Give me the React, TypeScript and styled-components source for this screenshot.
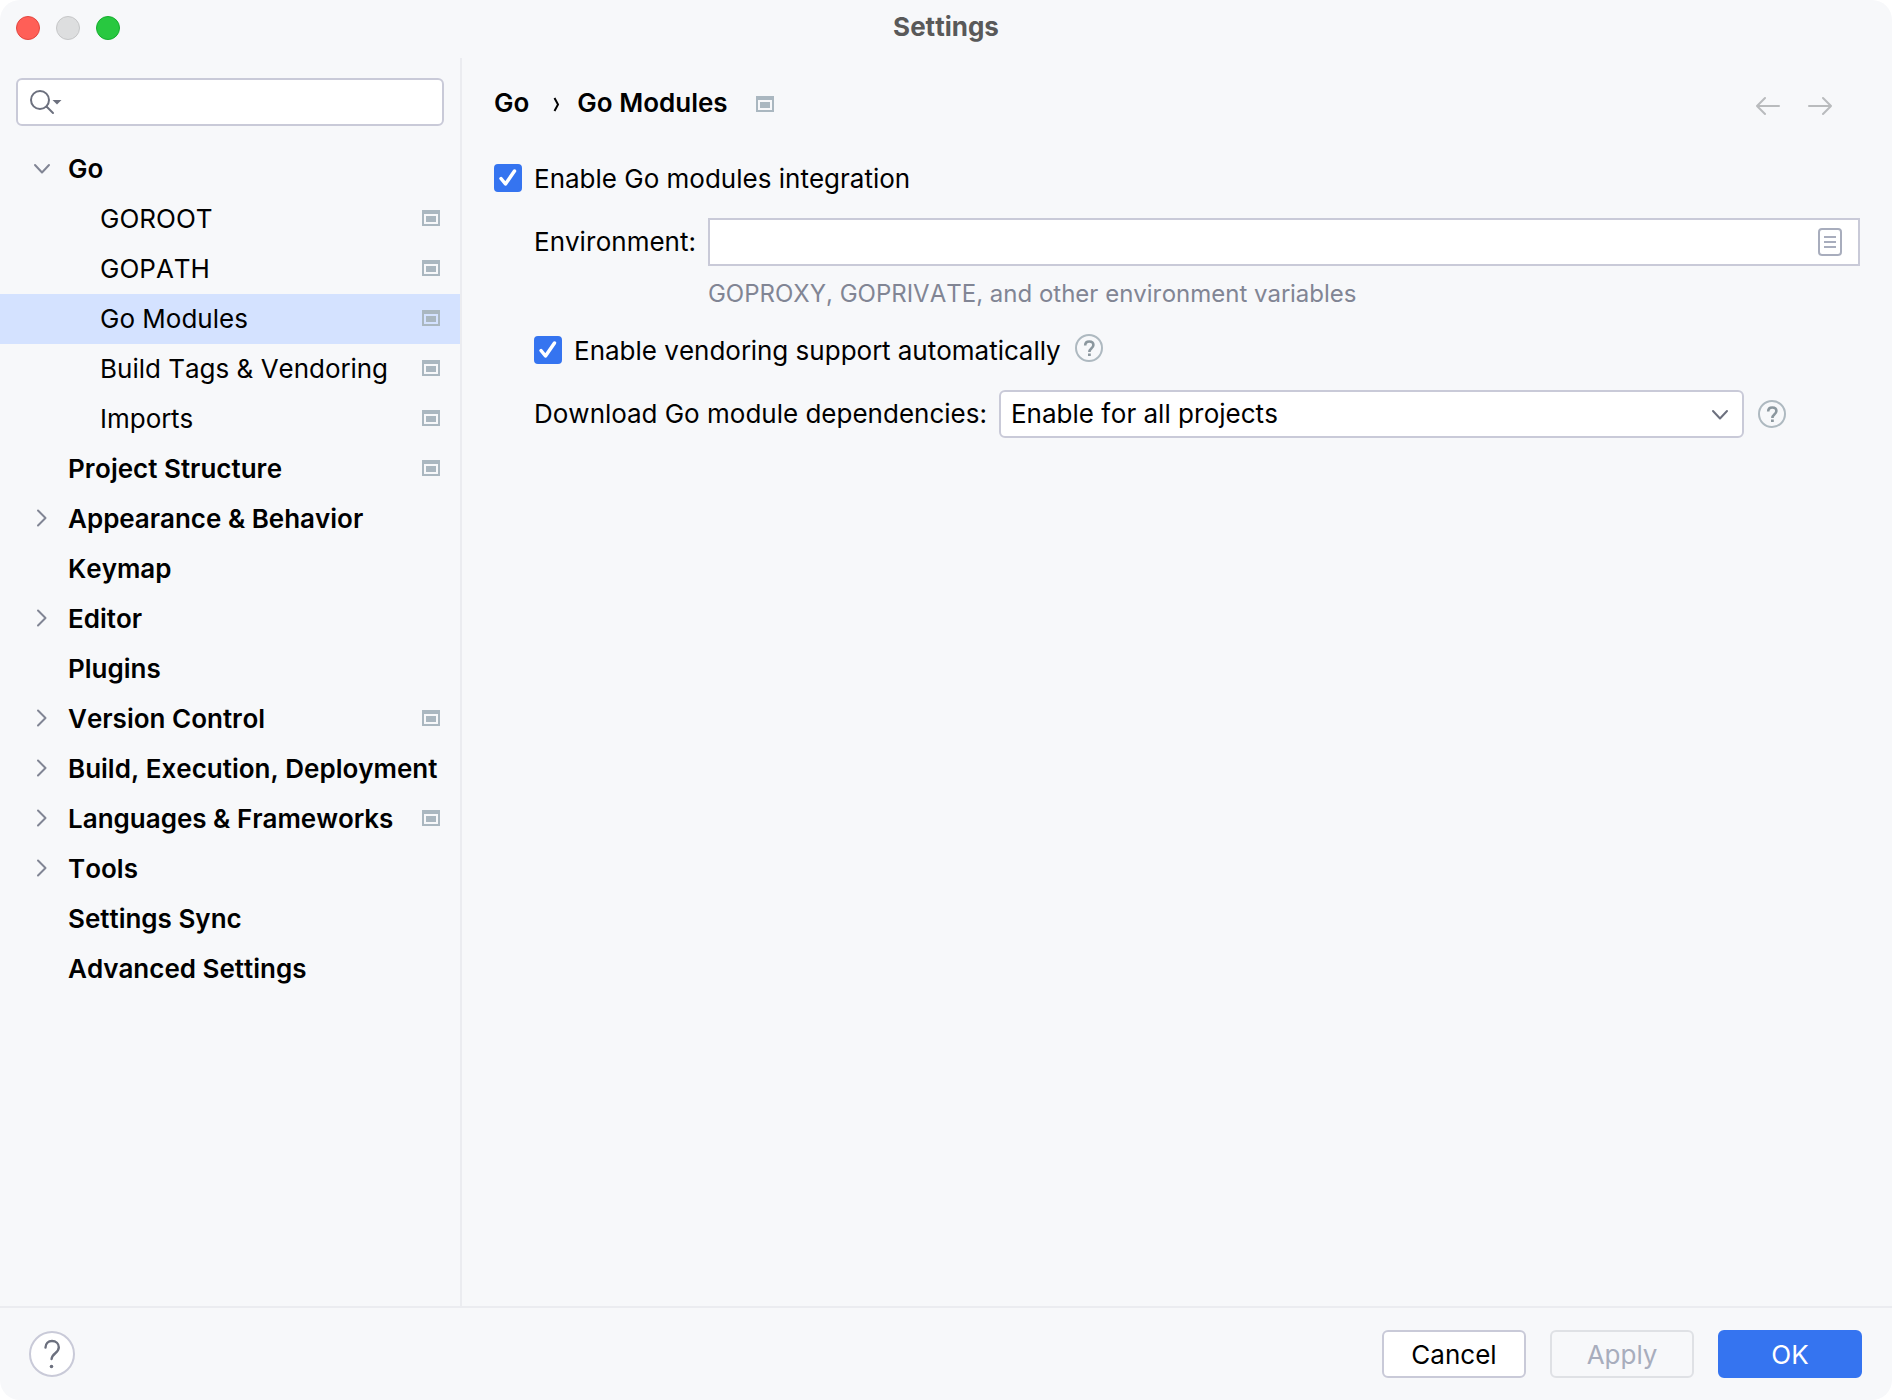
import React, { useState } from "react";
import styled, { createGlobalStyle, css } from "styled-components";

const GlobalStyle = createGlobalStyle`
  * {
    box-sizing: border-box;
  }
  body {
    margin: 0;
    background: #ffffff;
  }
  body, button, input, select {
    font-family: Inter, "Liberation Sans", sans-serif;
    font-size: 26px;
    line-height: 32px;
    font-kerning: none;
    color: #000000;
  }
`;

const Window = styled.div`
  display: flex;
  flex-direction: column;
  min-height: 100vh;
  background: #f7f8fa;
  border-radius: 20px;
  overflow: hidden;
`;

const TitleBar = styled.header`
  display: grid;
  grid-template-columns: 1fr auto 1fr;
  align-items: center;
  height: 58px;
  padding: 0 16px 2px;
`;

const WindowControls = styled.div`
  display: flex;
  gap: 16px;
`;

const WindowControl = styled.button<{ $fill: string; $edge: string }>`
  width: 24px;
  height: 24px;
  padding: 0;
  border: 1px solid ${(p) => p.$edge};
  border-radius: 50%;
  background: ${(p) => p.$fill};
`;

const Title = styled.h1`
  margin: 0;
  padding-bottom: 2px;
  font-size: 26px;
  line-height: 32px;
  font-weight: 700;
  color: #595959;
`;

const Body = styled.div`
  display: flex;
  flex: 1;
`;

const Sidebar = styled.aside`
  display: flex;
  flex-direction: column;
  gap: 18px;
  width: 462px;
  flex: none;
  padding-top: 20px;
  border-right: 2px solid #ebecf0;
`;

const SearchBox = styled.label`
  display: flex;
  align-items: center;
  gap: 8px;
  height: 48px;
  margin: 0 16px;
  padding: 0 12px;
  border: 2px solid #c9cad8;
  border-radius: 6px;
  background: #ffffff;
`;

const PlainInput = styled.input`
  flex: 1;
  min-width: 0;
  border: 0;
  padding: 0;
  outline: 0;
  background: transparent;
`;

const Tree = styled.ul`
  margin: 0;
  padding: 0;
  list-style: none;
`;

const TreeRow = styled.button<{ $nested: boolean; $selected: boolean }>`
  display: flex;
  align-items: center;
  width: 100%;
  height: 50px;
  padding: 0 20px 0 ${(p) => (p.$nested ? 60 : 28)}px;
  border: 0;
  background: ${(p) => (p.$selected ? "#d4e2ff" : "transparent")};
  font-weight: ${(p) => (p.$nested ? 400 : 600)};
  text-align: left;
  white-space: nowrap;
  & svg {
    margin-bottom: 2px;
  }
`;

const Arrow = styled.span`
  display: flex;
  width: 40px;
  flex: none;
`;

const RowLabel = styled.span`
  flex: 1;
  min-width: 0;
`;

const Main = styled.main`
  flex: 1;
  min-width: 0;
  padding: 28px 32px;
`;

const PageHeader = styled.div`
  display: flex;
  align-items: center;
  justify-content: space-between;
  height: 36px;
  margin-bottom: 39px;
`;

const Breadcrumbs = styled.nav`
  display: flex;
  align-items: center;
  font-weight: 600;
`;

const Crumb = styled.a`
  padding-bottom: 2px;
  color: inherit;
  text-decoration: none;
`;

const CrumbSeparator = styled.span`
  display: flex;
  margin: 0 16px 0 24px;
`;

const CrumbBadge = styled.span`
  display: flex;
  margin-left: 28px;
`;

const History = styled.div`
  display: flex;
  gap: 28px;
  padding: 4px 28px 0 0;
`;

const IconButton = styled.button`
  display: flex;
  padding: 0;
  border: 0;
  background: transparent;
`;

const CheckLabel = styled.label`
  display: flex;
  align-items: center;
  gap: 12px;
`;

const CheckText = styled.span`
  padding-top: 2px;
`;

const CheckBox = styled.input`
  appearance: none;
  width: 28px;
  height: 28px;
  flex: none;
  margin: 0;
  border: 2px solid #c9cad8;
  border-radius: 4px;
  background: #ffffff;
  &:checked {
    border-color: #3574f0;
    background: #3574f0;
  }
`;

const CheckCell = styled.span`
  display: grid;
  & > * {
    grid-area: 1 / 1;
  }
  & > svg {
    pointer-events: none;
  }
`;

const Options = styled.div`
  display: flex;
  flex-direction: column;
  margin-left: 40px;
  padding-top: 23px;
`;

const EnvironmentGrid = styled.div`
  display: grid;
  grid-template-columns: auto 1fr;
  align-items: center;
  column-gap: 12px;
  row-gap: 12px;
  margin-bottom: 23px;
`;

const EnvironmentField = styled.div`
  display: flex;
  align-items: center;
  height: 48px;
  padding: 0 16px 0 10px;
  border: 2px solid #c9cad8;
  background: #ffffff;
`;

const Hint = styled.p`
  grid-column: 2;
  margin: 0;
  font-size: 24px;
  line-height: 32px;
  color: #818594;
`;

const OptionLine = styled.div`
  display: flex;
  align-items: center;
  gap: 14px;
  margin-bottom: 23px;
  & > button {
    padding-bottom: 4px;
  }
`;

const DownloadLine = styled.div`
  display: flex;
  align-items: center;
  gap: 12px;
  padding-right: 74px;
`;

const SelectBox = styled.div`
  display: grid;
  flex: 1;
  align-items: center;
  margin-right: 2px;
  & > * {
    grid-area: 1 / 1;
  }
  & > svg {
    justify-self: end;
    margin-right: 10px;
    pointer-events: none;
  }
`;

const Select = styled.select`
  appearance: none;
  width: 100%;
  height: 48px;
  padding: 0 48px 0 10px;
  border: 2px solid #c9cad8;
  border-radius: 6px;
  background: #ffffff;
`;

const Footer = styled.footer`
  display: flex;
  align-items: center;
  justify-content: space-between;
  height: 94px;
  padding: 0 30px 0 29px;
  border-top: 2px solid #ebecf0;
`;

const Actions = styled.div`
  display: flex;
  gap: 24px;
`;

const Button = styled.button<{ $primary?: boolean }>`
  width: 144px;
  height: 48px;
  padding: 2px 0 0;
  border: 2px solid #c9cad8;
  border-radius: 6px;
  background: #ffffff;
  ${(p) =>
    p.$primary &&
    css`
      border-color: #3574f0;
      background: #3574f0;
      color: #ffffff;
    `}
  &:disabled {
    border-color: #dfe1e5;
    background: transparent;
    color: #a8adbd;
  }
`;

const SearchIcon = () => (
  <svg width="34" height="28" viewBox="0 0 34 28" fill="none" aria-hidden="true">
    <circle cx="10" cy="12" r="9" stroke="#6c707e" strokeWidth="2" />
    <path d="M16.5 18.500L23 25" stroke="#6c707e" strokeWidth="2" strokeLinecap="round" />
    <path d="M22.500 12h9l-4.500 4.500z" fill="#6c707e" />
  </svg>
);

const ProjectIcon = () => (
  <svg width="18" height="16" viewBox="0 0 18 16" aria-hidden="true">
    <path fill="#aab7c0" fillRule="evenodd" d="M0 0h18v16H0zM2 4v10h14V4z" />
    <path fill="#aab7c0" d="M4 6h10v6H4z" />
  </svg>
);

const Chevron = ({ down, color = "#818594" }: { down?: boolean; color?: string }) => (
  <svg width="28" height="20" viewBox="0 0 28 20" fill="none" aria-hidden="true">
    <path
      d={down ? "M7 7l7 7.500L21 7" : "M10 2.500L17.500 10L10 17.500"}
      stroke={color}
      strokeWidth="2"
      strokeLinecap="round"
      strokeLinejoin="round"
    />
  </svg>
);

const CrumbChevron = () => (
  <svg width="8" height="16" viewBox="0 0 8 16" fill="none" aria-hidden="true">
    <path d="M1.500 2L5 8.500L1.500 15" stroke="#000000" strokeWidth="2" />
  </svg>
);

const HistoryArrow = ({ forward }: { forward?: boolean }) => (
  <svg width="24" height="20" viewBox="0 0 24 20" fill="none" aria-hidden="true">
    <path
      d={forward ? "M1 10h22M15 2l8 8l-8 8" : "M23 10H1M9 2l-8 8l8 8"}
      stroke="#b9bbbd"
      strokeWidth="2"
      strokeLinecap="round"
      strokeLinejoin="round"
    />
  </svg>
);

const CheckMark = () => (
  <svg width="28" height="28" viewBox="0 0 28 28" fill="none" aria-hidden="true">
    <path d="M7 14.500L11.500 20L20.500 7" stroke="#ffffff" strokeWidth="3.500" strokeLinecap="round" strokeLinejoin="round" />
  </svg>
);

const ListIcon = () => (
  <svg width="24" height="28" viewBox="0 0 24 28" fill="none" aria-hidden="true">
    <rect x="1" y="1" width="22" height="26" rx="3" stroke="#a8adbd" strokeWidth="2" />
    <path d="M6 9h12M6 14h12M6 19h12" stroke="#a8adbd" strokeWidth="2" />
  </svg>
);

const HintIcon = () => (
  <svg width="28" height="28" viewBox="0 0 28 28" fill="none" aria-hidden="true">
    <circle cx="14" cy="14" r="13" stroke="#aeb9c0" strokeWidth="2" />
    <path
      d="M10.200 11.400C10.200 8.900 11.800 7.500 14.200 7.500C16.800 7.500 18.400 8.900 18.400 11C18.400 12.700 17.500 13.500 16.300 14.500C15 15.600 14.400 16.200 14.400 18"
      stroke="#8b979e"
      strokeWidth="2.600"
    />
    <path d="M13 19.500h2.800V22H13z" fill="#8b979e" />
  </svg>
);

const HelpIcon = () => (
  <svg width="46" height="46" viewBox="0 0 46 46" fill="none" aria-hidden="true">
    <circle cx="23" cy="23" r="22" fill="#ffffff" stroke="#c9cad8" strokeWidth="2" />
    <path
      d="M16.500 16.500C16.500 12.500 19.200 10 23 10C27 10 29.800 12.600 29.800 16.300C29.800 19 28.500 20.500 26.300 22.200C23.800 24.200 22.800 25.200 22.600 28"
      stroke="#6c707e"
      strokeWidth="2.400"
      strokeLinecap="round"
    />
    <circle cx="22.500" cy="35.500" r="1.800" fill="#6c707e" />
  </svg>
);

type Item = { label: string; nested?: boolean; arrow?: "down" | "right"; project?: boolean };

const items: Item[] = [
  { label: "Go", arrow: "down" },
  { label: "GOROOT", nested: true, project: true },
  { label: "GOPATH", nested: true, project: true },
  { label: "Go Modules", nested: true, project: true },
  { label: "Build Tags & Vendoring", nested: true, project: true },
  { label: "Imports", nested: true, project: true },
  { label: "Project Structure", project: true },
  { label: "Appearance & Behavior", arrow: "right" },
  { label: "Keymap" },
  { label: "Editor", arrow: "right" },
  { label: "Plugins" },
  { label: "Version Control", arrow: "right", project: true },
  { label: "Build, Execution, Deployment", arrow: "right" },
  { label: "Languages & Frameworks", arrow: "right", project: true },
  { label: "Tools", arrow: "right" },
  { label: "Settings Sync" },
  { label: "Advanced Settings" },
];

function Check({ label }: { label: string }) {
  const [checked, setChecked] = useState(true);
  return (
    <CheckLabel>
      <CheckCell>
        <CheckBox type="checkbox" checked={checked} onChange={(e) => setChecked(e.target.checked)} />
        {checked && <CheckMark />}
      </CheckCell>
      <CheckText>{label}</CheckText>
    </CheckLabel>
  );
}

export default function App() {
  const [selected, setSelected] = useState("Go Modules");

  return (
    <>
      <GlobalStyle />
      <Window>
        <TitleBar>
          <WindowControls>
            <WindowControl $fill="#ff5f57" $edge="#e2463f" aria-label="Close" />
            <WindowControl $fill="#dddedf" $edge="#c5c6c7" aria-label="Minimize" />
            <WindowControl $fill="#28c840" $edge="#14ae2d" aria-label="Zoom" />
          </WindowControls>
          <Title>Settings</Title>
        </TitleBar>
        <Body>
          <Sidebar>
            <SearchBox>
              <SearchIcon />
              <PlainInput type="text" aria-label="Search settings" />
            </SearchBox>
            <Tree>
              {items.map((item) => (
                <li key={item.label}>
                  <TreeRow
                    $nested={!!item.nested}
                    $selected={item.label === selected}
                    onClick={() => setSelected(item.label)}
                  >
                    <Arrow>{item.arrow && <Chevron down={item.arrow === "down"} />}</Arrow>
                    <RowLabel>{item.label}</RowLabel>
                    {item.project && <ProjectIcon />}
                  </TreeRow>
                </li>
              ))}
            </Tree>
          </Sidebar>
          <Main>
            <PageHeader>
              <Breadcrumbs aria-label="Breadcrumb">
                <Crumb href="#go">Go</Crumb>
                <CrumbSeparator>
                  <CrumbChevron />
                </CrumbSeparator>
                <Crumb href="#go-modules">Go Modules</Crumb>
                <CrumbBadge>
                  <ProjectIcon />
                </CrumbBadge>
              </Breadcrumbs>
              <History>
                <IconButton aria-label="Back">
                  <HistoryArrow />
                </IconButton>
                <IconButton aria-label="Forward">
                  <HistoryArrow forward />
                </IconButton>
              </History>
            </PageHeader>
            <Check label="Enable Go modules integration" />
            <Options>
              <EnvironmentGrid>
                <label htmlFor="environment">Environment:</label>
                <EnvironmentField>
                  <PlainInput id="environment" type="text" />
                  <IconButton aria-label="Edit environment variables">
                    <ListIcon />
                  </IconButton>
                </EnvironmentField>
                <Hint>GOPROXY, GOPRIVATE, and other environment variables</Hint>
              </EnvironmentGrid>
              <OptionLine>
                <Check label="Enable vendoring support automatically" />
                <IconButton aria-label="About vendoring support">
                  <HintIcon />
                </IconButton>
              </OptionLine>
              <DownloadLine>
                <label htmlFor="download">Download Go module dependencies:</label>
                <SelectBox>
                  <Select id="download">
                    <option>Enable for all projects</option>
                  </Select>
                  <Chevron down color="#6c707e" />
                </SelectBox>
                <IconButton aria-label="About downloading dependencies">
                  <HintIcon />
                </IconButton>
              </DownloadLine>
            </Options>
          </Main>
        </Body>
        <Footer>
          <IconButton aria-label="Help">
            <HelpIcon />
          </IconButton>
          <Actions>
            <Button>Cancel</Button>
            <Button disabled>Apply</Button>
            <Button $primary>OK</Button>
          </Actions>
        </Footer>
      </Window>
    </>
  );
}
